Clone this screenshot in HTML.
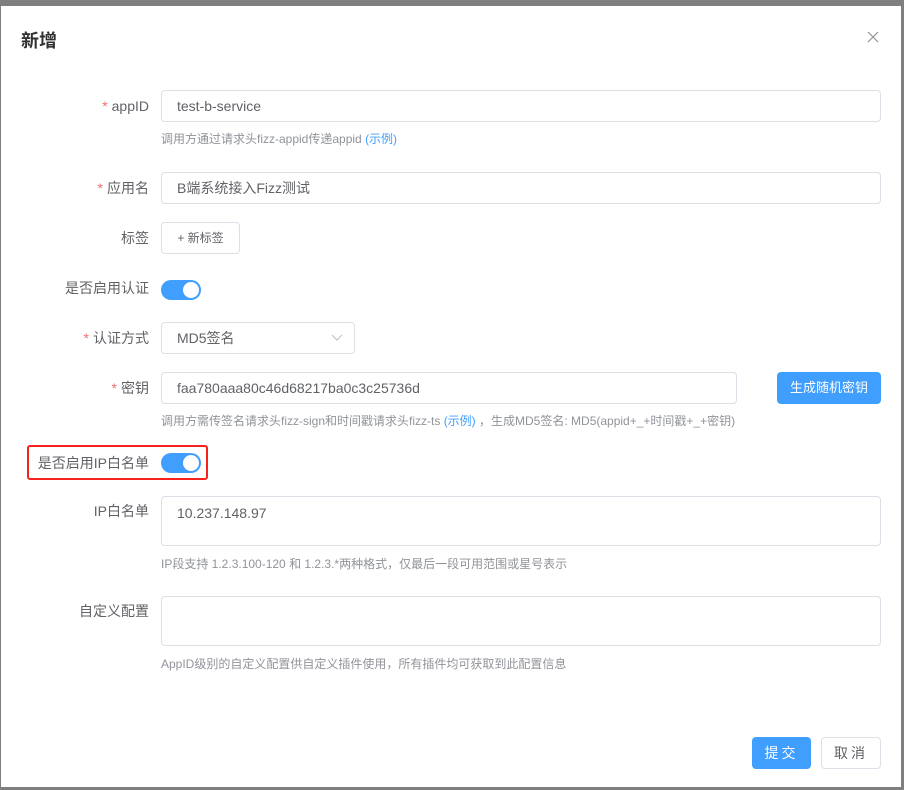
<!DOCTYPE html>
<html><head><meta charset="utf-8"><style>
*{box-sizing:border-box;margin:0;padding:0}
body{width:904px;height:790px;background:#7f7f7f;position:relative;overflow:hidden;font-family:"Liberation Sans","Noto Sans CJK SC",sans-serif;font-size:14px;color:#606266}
.dlg{position:absolute;left:1px;top:6px;width:900px;height:781px;background:#fff}
.a{position:absolute}
.t{left:20px;top:21px;font-size:18px;font-weight:bold;color:#303133}
.lbl{right:752px;text-align:right;white-space:nowrap;line-height:32px}
.lbl i{color:#f56c6c;font-style:normal;margin-right:4px}
.in{border:1px solid #dcdfe6;border-radius:4px;background:#fff;padding:0 15px;line-height:30px;color:#606266;height:32px}
.hint{font-size:12px;color:#909399;white-space:nowrap}
.hint b{color:#409eff;font-weight:normal}
.sw{width:40px;height:20px;border-radius:10px;background:#409eff}
.sw:after{content:"";position:absolute;right:2px;top:2px;width:16px;height:16px;border-radius:50%;background:#fff}
.btn{border-radius:4px;text-align:center;line-height:30px;font-size:14px}
</style></head><body>
<div class="dlg">
<div class="a t">新增</div>
<svg class="a" style="left:866px;top:25px" width="12" height="12"><path d="M1 1L11 11M11 1L1 11" stroke="#909399" stroke-width="1.2"/></svg>

<div class="a lbl" style="top:84px"><i>*</i>appID</div>
<div class="a in" style="left:160px;top:84px;width:720px">test-b-service</div>
<div class="a hint" style="left:160px;top:124px">调用方通过请求头fizz-appid传递appid <b>(示例)</b></div>

<div class="a lbl" style="top:166px"><i>*</i>应用名</div>
<div class="a in" style="left:160px;top:166px;width:720px">B端系统接入Fizz测试</div>

<div class="a lbl" style="top:216px">标签</div>
<div class="a in" style="left:160px;top:216px;width:79px;font-size:12px;padding:0;text-align:center">+ 新标签</div>

<div class="a lbl" style="top:266px">是否启用认证</div>
<div class="a sw" style="left:160px;top:274px"></div>

<div class="a lbl" style="top:316px"><i>*</i>认证方式</div>
<div class="a in" style="left:160px;top:316px;width:194px">MD5签名</div>
<svg class="a" style="left:330px;top:328px" width="12" height="8"><path d="M1 1L6 6L11 1" fill="none" stroke="#c0c4cc" stroke-width="1.2"/></svg>

<div class="a lbl" style="top:366px"><i>*</i>密钥</div>
<div class="a in" style="left:160px;top:366px;width:576px">faa780aaa80c46d68217ba0c3c25736d</div>
<div class="a btn" style="left:776px;top:366px;width:104px;height:32px;background:#409eff;color:#fff;font-size:13px;line-height:32px">生成随机密钥</div>
<div class="a hint" style="left:160px;top:406px">调用方需传签名请求头fizz-sign和时间戳请求头fizz-ts <b>(示例)</b> ，生成MD5签名: MD5(appid+_+时间戳+_+密钥)</div>

<div class="a" style="left:26px;top:439px;width:181px;height:35px;border:2px solid #f5231b;border-radius:3px"></div>
<div class="a lbl" style="top:441px">是否启用IP白名单</div>
<div class="a sw" style="left:160px;top:447px"></div>

<div class="a lbl" style="top:490px;line-height:30px">IP白名单</div>
<div class="a in" style="left:160px;top:490px;width:720px;height:50px;line-height:20px;padding-top:6px">10.237.148.97</div>
<div class="a hint" style="left:160px;top:549px">IP段支持 1.2.3.100-120 和 1.2.3.*两种格式，仅最后一段可用范围或星号表示</div>

<div class="a lbl" style="top:590px;line-height:30px">自定义配置</div>
<div class="a in" style="left:160px;top:590px;width:720px;height:50px"></div>
<div class="a hint" style="left:160px;top:649px">AppID级别的自定义配置供自定义插件使用，所有插件均可获取到此配置信息</div>

<div class="a btn" style="left:751px;top:731px;width:59px;height:32px;background:#409eff;color:#fff;line-height:32px;letter-spacing:3px">提交</div>
<div class="a btn" style="left:820px;top:731px;width:60px;height:32px;border:1px solid #dcdfe6;color:#606266;letter-spacing:3px">取消</div>
</div>
</body></html>
